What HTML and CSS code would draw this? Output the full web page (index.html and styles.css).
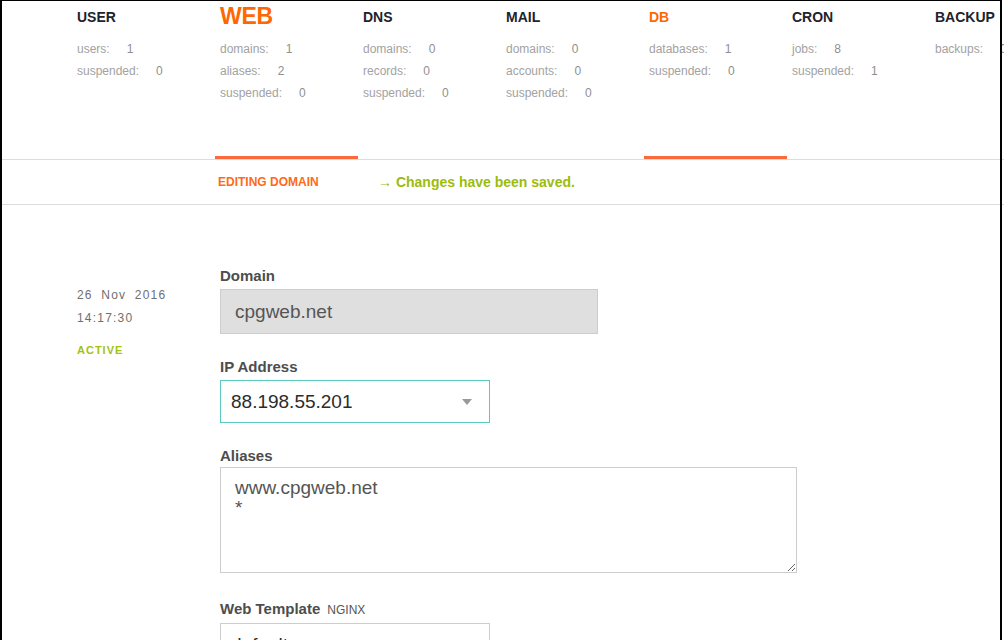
FILE: index.html
```html
<!DOCTYPE html>
<html lang="en">

<head>
    <meta charset="utf-8">
    <meta name="viewport" content="width=device-width, initial-scale=1.0">
    <title>Editing domain</title>
    <link rel="stylesheet" href="styles.css">
</head>

<body>

    <div class="frame"></div>

    <header>
        <nav class="tabs">
            <div class="tab">
                <h3 class="tab-title">USER</h3>
                <ul class="stats">
                    <li>users:<b>1</b></li>
                    <li>suspended:<b>0</b></li>
                </ul>
            </div>
            <div class="tab selected">
                <h3 class="tab-title">WEB</h3>
                <ul class="stats">
                    <li>domains:<b>1</b></li>
                    <li>aliases:<b>2</b></li>
                    <li>suspended:<b>0</b></li>
                </ul>
            </div>
            <div class="tab">
                <h3 class="tab-title">DNS</h3>
                <ul class="stats">
                    <li>domains:<b>0</b></li>
                    <li>records:<b>0</b></li>
                    <li>suspended:<b>0</b></li>
                </ul>
            </div>
            <div class="tab">
                <h3 class="tab-title">MAIL</h3>
                <ul class="stats">
                    <li>domains:<b>0</b></li>
                    <li>accounts:<b>0</b></li>
                    <li>suspended:<b>0</b></li>
                </ul>
            </div>
            <div class="tab hover">
                <h3 class="tab-title">DB</h3>
                <ul class="stats">
                    <li>databases:<b>1</b></li>
                    <li>suspended:<b>0</b></li>
                </ul>
            </div>
            <div class="tab">
                <h3 class="tab-title">CRON</h3>
                <ul class="stats">
                    <li>jobs:<b>8</b></li>
                    <li>suspended:<b>1</b></li>
                </ul>
            </div>
            <div class="tab">
                <h3 class="tab-title">BACKUP</h3>
                <ul class="stats">
                    <li>backups:<b>0</b></li>
                </ul>
            </div>
        </nav>

        <div class="subbar">
            <span class="sub-title">EDITING DOMAIN</span>
            <span class="saved"><span class="arrow">&rarr;</span> Changes have been saved.</span>
        </div>
    </header>

    <main class="content">
        <aside class="meta">
            <div class="date">26 Nov 2016</div>
            <div class="date">14:17:30</div>
            <div class="status">ACTIVE</div>
        </aside>

        <form class="edit">
            <div class="field field-domain">
                <label>Domain</label>
                <input class="input disabled" type="text" value="cpgweb.net" disabled>
            </div>

            <div class="field field-ip">
                <label>IP Address</label>
                <div class="select focus">
                    <span>88.198.55.201</span>
                    <svg class="caret" width="10" height="6" viewBox="0 0 10 6"><path d="M0 0h10L5 6z" fill="#999"/></svg>
                </div>
            </div>

            <div class="field field-aliases">
                <label>Aliases</label>
                <textarea class="textarea">www.cpgweb.net
*</textarea>
            </div>

            <div class="field">
                <label>Web Template<span class="hint">NGINX</span></label>
                <div class="select">
                    <span>default</span>
                    <svg class="caret" width="10" height="6" viewBox="0 0 10 6"><path d="M0 0h10L5 6z" fill="#999"/></svg>
                </div>
            </div>
        </form>
    </main>

</body>

</html>
```

FILE: styles.css
```css
html,
body {
    margin: 0;
    overflow: hidden;
}

body {
    font-family: "Liberation Sans", Arial, sans-serif;
    background-color: #fff;
    color: #555;
}

/* black window edge lying over the page */
.frame {
    position: fixed;
    top: 0;
    left: 0;
    bottom: -10px;
    width: 1002px;
    box-sizing: border-box;
    border-left: 2px solid #000;
    border-top: 1px solid #000;
    border-right: 2px solid #000;
    pointer-events: none;
    z-index: 10;
}

.tabs {
    display: flex;
    padding-left: 72px;
    border-bottom: 1px solid #ddd;
    width: 1200px;
}

.tab {
    flex: 0 0 143px;
    box-sizing: border-box;
    height: 159px;
    padding: 0 5px;
}

.tab-title {
    margin: 0;
    height: 34px;
    line-height: 34px;
    font-size: 14px;
    font-weight: bold;
    color: #22222c;
}

.selected,
.hover {
    border-bottom: 3px solid #fb6a3d;
}

.selected .tab-title {
    font-size: 23px;
    line-height: 32px;
    letter-spacing: -0.3px;
    color: #ff6701;
}

.hover .tab-title {
    color: #ff6701;
}

.stats {
    list-style-type: none;
    margin: 4px 0 0;
    padding: 0;
}

.stats li {
    font-size: 12px;
    line-height: 22px;
    color: #a2a2a2;
    white-space: nowrap;
}

.stats b {
    font-weight: normal;
    margin-left: 17px;
    color: #8f8f8f;
}

.subbar {
    display: flex;
    align-items: center;
    height: 44px;
    padding-left: 218px;
    border-bottom: 1px solid #ddd;
}

.sub-title {
    width: 162px;
    font-size: 12px;
    font-weight: bold;
    color: #ff6a1a;
}

.saved {
    margin: -1px 0 0 -2px;
    font-size: 14px;
    font-weight: bold;
    color: #9dbb0c;
}

.arrow {
    font-weight: normal;
}

.content {
    display: grid;
    grid-template-columns: 143px 1fr;
    padding: 61px 0 0 72px;
}

.meta {
    padding: 18px 0 0 5px;
}

.date {
    font-size: 12px;
    line-height: 23px;
    letter-spacing: 1.2px;
    word-spacing: 4px;
    color: #6f6f6f;
}

.status {
    margin-top: 10px;
    font-size: 11px;
    line-height: 20px;
    font-weight: bold;
    letter-spacing: 1px;
    color: #a2c30f;
}

.edit {
    padding-left: 5px;
}

.field {
    margin-bottom: 23px;
}

.field-ip {
    margin-bottom: 23px;
}

.field-aliases {
    margin-bottom: 26px;
}

.field label {
    display: block;
    margin-bottom: 3px;
    font-size: 15px;
    line-height: 20px;
    font-weight: bold;
    color: #4d4d4d;
}

.field-aliases label {
    margin-bottom: 1px;
}

.hint {
    margin-left: 7px;
    font-size: 12px;
    font-weight: normal;
    color: #555;
}

.input,
.select,
.textarea {
    box-sizing: border-box;
    font-family: "Liberation Sans", Arial, sans-serif;
    font-size: 19px;
    border: 1px solid #cdcdcd;
    background-color: #fff;
}

.input {
    display: block;
    width: 378px;
    height: 45px;
    padding: 0 14px;
    color: #555;
}

.input.disabled {
    background-color: #dfdfdf;
    -webkit-text-fill-color: #555;
    opacity: 1;
}

.select {
    display: flex;
    justify-content: space-between;
    align-items: center;
    width: 270px;
    height: 43px;
    padding: 0 17px 0 10px;
    color: #2c2c2c;
}

.select.focus {
    border-color: #5ac9be;
}

.textarea {
    display: block;
    width: 577px;
    height: 106px;
    margin: 0;
    padding: 10px 14px;
    line-height: 20px;
    color: #555;
}
```
